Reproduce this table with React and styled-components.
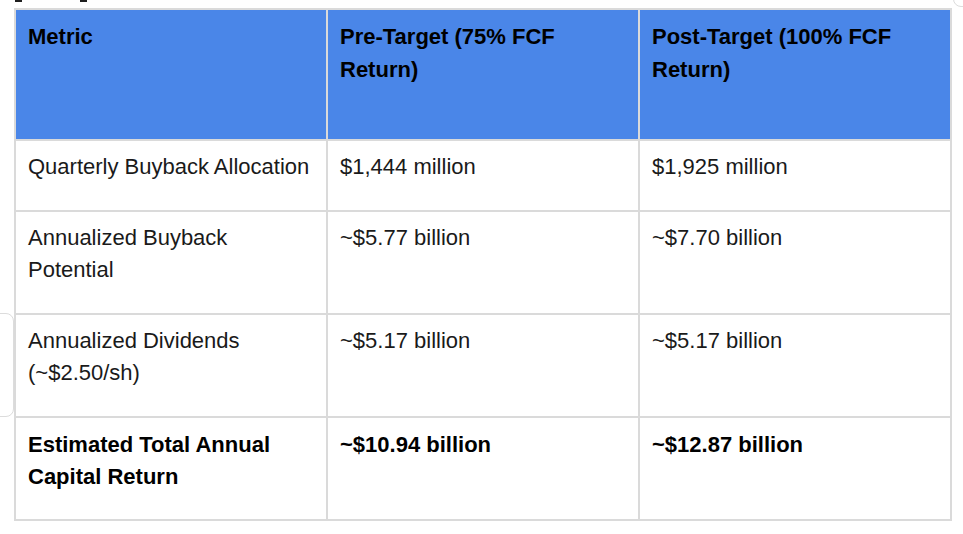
import React from 'react';
import styled, { createGlobalStyle } from 'styled-components';

const GlobalStyle = createGlobalStyle`
  html, body {
    margin: 0;
    padding: 0;
    background: #ffffff;
  }
  body {
    font-family: "Liberation Sans", Arial, sans-serif;
    color: #1f1f1f;
  }
`;

const Page = styled.div`
  position: relative;
  width: 963px;
  height: 534px;
  overflow: hidden;
  padding: 8px 0 0 14px;
  box-sizing: border-box;
`;

// bits of neighbouring chat UI peeking in at the edges
const EdgeCard = styled.div`
  position: absolute;
  border: 1px solid #dcdcdc;
  border-radius: 8px;
  background: #fff;
`;

const Dash = styled.span`
  position: absolute;
  left: 0;
  top: 51px;
  width: 4px;
  height: 1px;
  background: #6f6f6f;
`;

const Tick = styled.span`
  position: absolute;
  top: 0;
  height: 2px;
  width: 7px;
  background: #1f1f1f;
`;

const Table = styled.table`
  position: relative;
  z-index: 1;
  border-collapse: collapse;
  table-layout: fixed;
  width: 938px;
  background: #fff;
  font-size: 22px;
`;

const Col = styled.col`
  width: 312px;
`;

const HeadCell = styled.th`
  background: #4a86e8;
  color: #000;
  font-weight: 700;
  text-align: left;
  vertical-align: top;
  line-height: 33px;
  padding: 10px 12px 53px;
  border: 2px solid #dadada;
`;

const Cell = styled.td`
  vertical-align: top;
  line-height: 32px;
  padding: ${p => (p.$strong ? '11px 12px 26px' : '10px 12px 27px')};
  border: 2px solid #dadada;
  color: ${p => (p.$strong ? '#000' : '#1a1a1a')};
  font-weight: ${p => (p.$strong ? 700 : 400)};
`;

const rows = [
  ['Quarterly Buyback Allocation', '$1,444 million', '$1,925 million'],
  ['Annualized Buyback Potential', '~$5.77 billion', '~$7.70 billion'],
  ['Annualized Dividends (~$2.50/sh)', '~$5.17 billion', '~$5.17 billion'],
  ['Estimated Total Annual Capital Return', '~$10.94 billion', '~$12.87 billion', true],
];

export default function App() {
  return (
    <>
      <GlobalStyle />
      <Page>
        <Tick style={{ left: 15 }} />
        <Tick style={{ left: 80 }} />
        <EdgeCard style={{ left: -12, top: 313, width: 24, height: 102 }}>
          <Dash />
        </EdgeCard>
        <EdgeCard style={{ left: 953, top: -12, width: 30, height: 17 }} />
        <Table>
          <colgroup>
            <Col />
            <Col />
            <Col />
          </colgroup>
          <thead>
            <tr>
              <HeadCell>Metric</HeadCell>
              <HeadCell>Pre-Target (75% FCF Return)</HeadCell>
              <HeadCell>Post-Target (100% FCF Return)</HeadCell>
            </tr>
          </thead>
          <tbody>
            {rows.map(([label, pre, post, strong]) => (
              <tr key={label}>
                <Cell $strong={strong}>{label}</Cell>
                <Cell $strong={strong}>{pre}</Cell>
                <Cell $strong={strong}>{post}</Cell>
              </tr>
            ))}
          </tbody>
        </Table>
      </Page>
    </>
  );
}
